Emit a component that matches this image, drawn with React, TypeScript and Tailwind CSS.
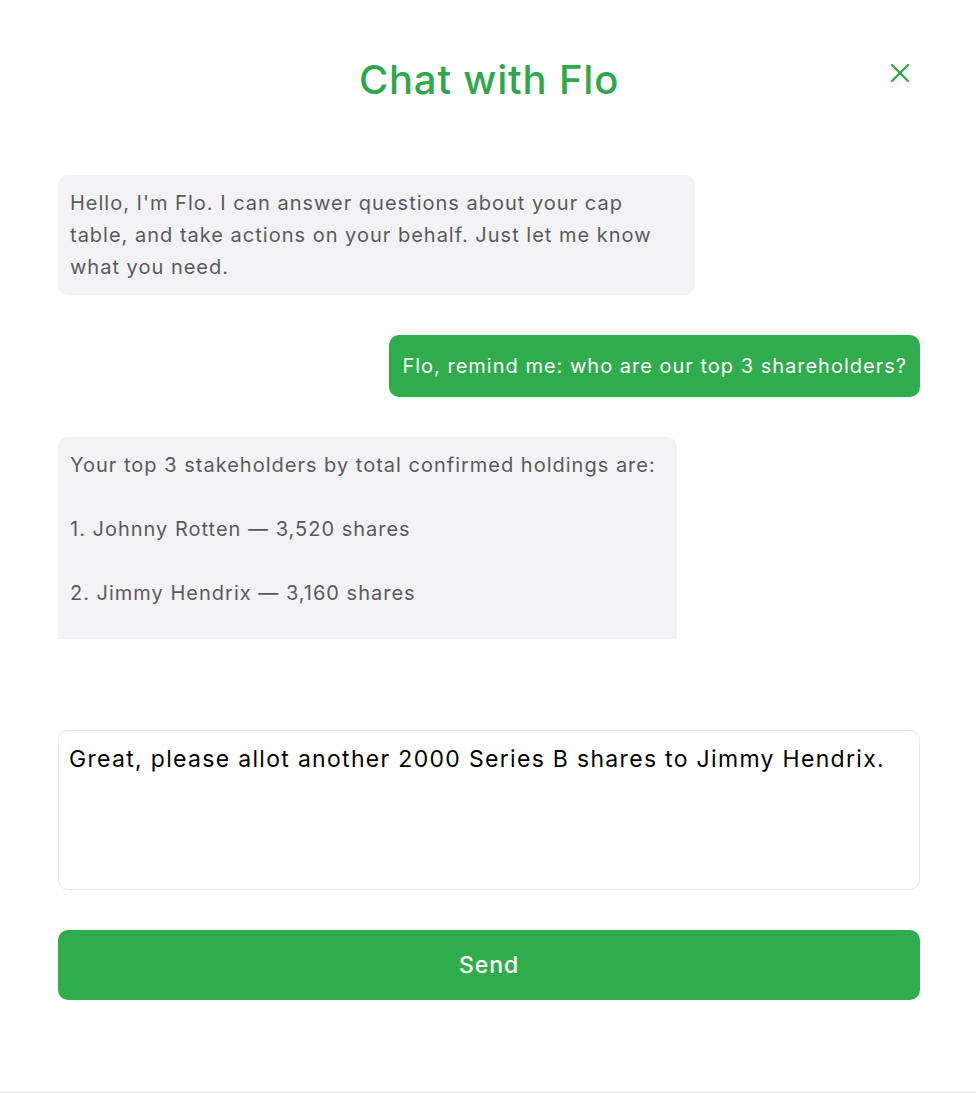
import { X } from "lucide-react";

const font = { fontFamily: "Inter, 'Noto Sans', sans-serif" };

function AssistantBubble({ text, className }: { text: string; className: string }) {
  return (
    <div
      className={`self-start whitespace-pre-wrap bg-[#f3f3f5] px-3 py-3 text-[20px] leading-8 tracking-[0.05em] text-[#5a5a5e] ${className}`}
    >
      {text}
    </div>
  );
}

export default function App() {
  return (
    <div
      className="flex h-[1093px] w-full flex-col border-b border-[#e4e4e4] bg-white pl-[58px] pr-[56px]"
      style={font}
    >
      <header className="relative flex h-[175px] items-start justify-center pt-[56px]">
        <h1 className="text-[40px] font-medium leading-[48px] tracking-[0.02em] text-[#2fa84b]">
          Chat with Flo
        </h1>
        <button className="absolute right-[4px] top-[57px] text-[#2fa84b]">
          <X className="h-8 w-8" strokeWidth={1.7} />
        </button>
      </header>

      <div className="flex h-[464px] flex-col gap-10 overflow-hidden">
        <AssistantBubble
          className="w-[637px] rounded-[10px]"
          text="Hello, I'm Flo. I can answer questions about your cap table, and take actions on your behalf. Just let me know what you need."
        />
        <div className="self-end rounded-[10px] bg-[#2fac4c] px-[13px] py-[15px] text-[20px] leading-8 tracking-[0.05em] text-white">
          Flo, remind me: who are our top 3 shareholders?
        </div>
        <AssistantBubble
          className="h-[202px] w-[619px] shrink-0 rounded-t-[10px]"
          text={
            "Your top 3 stakeholders by total confirmed holdings are:\n\n1. Johnny Rotten — 3,520 shares\n\n2. Jimmy Hendrix — 3,160 shares"
          }
        />
      </div>

      <textarea
        className="mt-[91px] h-[160px] w-full resize-none rounded-[10px] border border-[#e8e8ea] px-[10px] py-[14px] text-[23px] leading-7 tracking-[0.057em] text-black outline-none"
        style={font}
        defaultValue="Great, please allot another 2000 Series B shares to Jimmy Hendrix."
      />

      <button className="mt-10 h-[70px] w-full rounded-[10px] bg-[#2fac4c] text-[23px] font-medium tracking-[0.04em] text-white">
        Send
      </button>
    </div>
  );
}
